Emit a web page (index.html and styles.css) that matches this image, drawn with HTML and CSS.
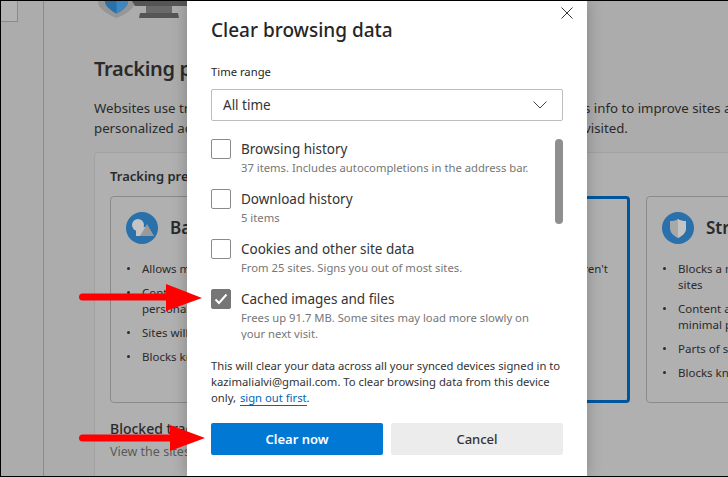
FILE: index.html
```html
<!DOCTYPE html>
<html lang="en">
<head>
<meta charset="utf-8">
<title>Clear browsing data</title>
<link rel="stylesheet" href="styles.css">
</head>
<body>
<div class="stage">
  <div class="page">
    <aside class="sidebar"><div class="side-tab"></div></aside>
    <main class="main">
      <svg class="hero" width="100" height="17" viewBox="0 0 100 17" aria-hidden="true">
        <path d="M0 -6H37V1C37 8 26 14 18.500 17C11 14 0 8 0 1Z" fill="#969696"/>
        <path d="M7 -6H30V1C30 5 24 10 18.500 12.500C13 10 7 5 7 1Z" fill="#2a70ab"/>
        <path d="M18.500 -6H30V1C30 5 24 10 18.500 12.500Z" fill="#3f86c0"/>
        <path d="M34 0H94V5H37Z" fill="#555"/>
        <rect x="48" y="5" width="26" height="7" fill="#6a6a6a"/>
        <path d="M42 12H80L81 17H41Z" fill="#555"/>
      </svg>
      <h1 class="page-title">Tracking p</h1>
      <div class="intro-line"><span>Websites use tr</span><span>s info to improve sites a</span></div>
      <div class="intro-line"><span>personalized ac</span><span>visited.</span></div>
      <section class="panel">
        <h2 class="panel-title">Tracking pre</h2>
        <div class="levels">
          <article class="level">
            <header class="level-head">
              <svg class="level-icon" viewBox="0 0 32 32" aria-hidden="true"><circle cx="16" cy="16" r="16" fill="#2a70ab"/><circle cx="12" cy="13" r="6" fill="#c4c4c4"/><rect x="10" y="15" width="12" height="9" fill="#c4c4c4"/><path d="M14 24L21 12L28 24Z" fill="#9a9a9a"/></svg>
              <h3 class="level-name">Ba</h3>
            </header>
            <ul class="level-list">
              <li>Allows m</li>
              <li>Cont<br>personal</li>
              <li>Sites will</li>
              <li>Blocks kn</li>
            </ul>
          </article>
          <article class="level level-on">
            <ul class="level-list level-list-end">
              <li>ren't</li>
            </ul>
          </article>
          <article class="level">
            <header class="level-head">
              <svg class="level-icon" viewBox="0 0 32 32" aria-hidden="true"><circle cx="16" cy="16" r="16" fill="#2a70ab"/><path d="M8 9C12 9 14 8.500 16 7C18 8.500 20 9 24 9V16C24 21 20 24 16 26C12 24 8 21 8 16Z" fill="#a8a8a8"/><path d="M16 7C18 8.500 20 9 24 9V16C24 21 20 24 16 26Z" fill="#c4c4c4"/></svg>
              <h3 class="level-name">Str</h3>
            </header>
            <ul class="level-list">
              <li>Blocks a m<br>sites</li>
              <li>Content a<br>minimal p</li>
              <li>Parts of s</li>
              <li>Blocks kn</li>
            </ul>
          </article>
        </div>
        <h2 class="blocked-title">Blocked trac</h2>
        <p class="blocked-text">View the sites</p>
      </section>
    </main>
  </div>

  <div class="dialog" role="dialog">
    <svg class="close" width="12" height="12" viewBox="0 0 12 12" aria-hidden="true"><path d="M0.500 0.500L11.500 11.500M11.500 0.500L0.500 11.500" stroke="#333" stroke-width="1" fill="none"/></svg>
    <h2 class="dialog-title">Clear browsing data</h2>
    <div class="field-label">Time range</div>
    <div class="select">
      <span>All time</span>
      <svg width="14" height="8" viewBox="0 0 14 8" aria-hidden="true"><path d="M0.500 0.500L7 7L13.500 0.500" stroke="#444" stroke-width="1" fill="none"/></svg>
    </div>
    <div class="list">
      <div class="scrollbar"></div>
      <div class="row"><span class="box"></span><div><div class="row-title">Browsing history</div><div class="row-sub">37 items. Includes autocompletions in the address bar.</div></div></div>
      <div class="row"><span class="box"></span><div><div class="row-title">Download history</div><div class="row-sub">5 items</div></div></div>
      <div class="row"><span class="box"></span><div><div class="row-title">Cookies and other site data</div><div class="row-sub">From 25 sites. Signs you out of most sites.</div></div></div>
      <div class="row"><span class="box box-on"><svg width="14" height="12" viewBox="0 0 14 12" aria-hidden="true"><path d="M1.500 6.500L5 10L12.500 1.500" stroke="#fff" stroke-width="2" fill="none"/></svg></span><div><div class="row-title">Cached images and files</div><div class="row-sub">Frees up 91.7 MB. Some sites may load more slowly on<br>your next visit.</div></div></div>
    </div>
    <p class="note">This will clear your data across all your synced devices signed in to<br>kazimalialvi@gmail.com. To clear browsing data from this device<br>only, <a class="link" href="#">sign out first</a>.</p>
    <div class="actions">
      <button class="btn btn-primary">Clear now</button>
      <button class="btn btn-plain">Cancel</button>
    </div>
  </div>

  <svg class="arrows" width="728" height="477" viewBox="0 0 728 477" aria-hidden="true">
    <path d="M82.500 297H170" stroke="#fe0000" stroke-width="7" stroke-linecap="round"/>
    <path d="M166 284L202 298L166 311Z" fill="#fe0000"/>
    <path d="M82.500 438H174" stroke="#fe0000" stroke-width="7" stroke-linecap="round"/>
    <path d="M170 425L205 438L170 451Z" fill="#fe0000"/>
  </svg>
</div>
</body>
</html>
```

FILE: styles.css
```css
* { box-sizing: border-box; }
html, body { margin: 0; padding: 0; }
body { font-family: "Noto Sans", "Open Sans", sans-serif; color: #262626; }
h1, h2, h3, p, ul { margin: 0; padding: 0; }

.stage {
  position: relative;
  width: 728px;
  height: 477px;
  overflow: hidden;
  background: #acacac;
  border-top: 1px solid #000;
  border-bottom: 1px solid #000;
  border-left: 1px solid #000;
}

.page { display: flex; height: 100%; }
.sidebar { width: 43px; flex: none; border-right: 1px solid #8a8a8a; }
.side-tab { width: 17px; height: 21px; background: #b2b2b2; border: 1px solid #8a8a8a; border-width: 0 1px 1px 0; }
.main { flex: none; width: 684px; padding-left: 50px; color: #2a2a2a; }
.hero { display: block; margin-left: 4px; }

.page-title { font-size: 20px; line-height: 28px; font-weight: 600; margin-top: 37px; white-space: nowrap; letter-spacing: -0.3px; }
.intro-line { display: grid; grid-template-columns: 490px 1fr; font-size: 13.250px; line-height: 20px; white-space: nowrap; overflow: hidden; }
.page-title + .intro-line { margin-top: 15px; }
.panel { margin-top: 14px; width: 700px; height: 340px; padding: 14px 15px; background: #b0b0b0; border: 1px solid #a2a2a2; border-radius: 4px 0 0 0; }
.panel-title { font-size: 13px; line-height: 18px; font-weight: 600; }
.levels { display: grid; grid-template-columns: repeat(3, 252px); gap: 16px; margin-top: 11px; }
.level { height: 207px; padding: 15px; border: 1px solid #8a8a8a; border-radius: 4px; }
.level-on { border: 3px solid #00569c; padding: 13px; }
.level-head { display: flex; align-items: center; gap: 12px; }
.level-icon { width: 32px; height: 32px; flex: none; display: block; }
.level-name { font-size: 17px; line-height: 32px; font-weight: 600; }
.level-list { list-style: none; margin-top: 17px; font-size: 11.500px; line-height: 16px; white-space: nowrap; }
.level-list li { position: relative; padding-left: 16px; margin-bottom: 8px; }
.level-list li::before { content: ""; position: absolute; left: 1px; top: 6px; width: 3px; height: 3px; border-radius: 50%; background: #2a2a2a; }
.level-list-end { margin-top: 49px; text-align: right; padding-right: 6px; }
.level-list-end li::before { display: none; }
.blocked-title { font-size: 14px; line-height: 18px; font-weight: 500; margin-top: 17px; }
.blocked-text { font-size: 12.500px; line-height: 16px; margin-top: 6px; color: #5a5a5a; }

.dialog {
  position: absolute;
  left: 186px;
  top: 0;
  width: 400px;
  height: 475px;
  padding: 16px 24px 0;
  background: #fff;
  box-shadow: 0 0 14px rgba(0, 0, 0, 0.25);
}
.close { position: absolute; right: 14px; top: 6px; display: block; }
.dialog-title { font-size: 19px; line-height: 26px; font-weight: 500; color: #262626; }
.field-label { font-size: 11.250px; line-height: 16px; margin-top: 21px; color: #262626; }
.select { display: flex; align-items: center; justify-content: space-between; height: 32px; margin-top: 9px; padding: 0 15px 0 11px; border: 1px solid #bdbdbd; border-radius: 2px; font-size: 13.500px; color: #333; }
.list { position: relative; height: 201px; margin-top: 18px; overflow: hidden; }
.scrollbar { position: absolute; right: 0; top: 0; width: 8px; height: 85px; border-radius: 4px; background: #8f8f8f; }
.row { display: flex; gap: 10px; height: 50px; }
.box { flex: none; width: 20px; height: 20px; border: 1px solid #8a8a8a; border-radius: 2px; display: flex; align-items: center; justify-content: center; }
.box-on { background: #767676; border-color: #767676; }
.row-title { font-size: 13.500px; line-height: 20px; color: #333; }
.row-sub { font-size: 11.250px; line-height: 16px; color: #767676; margin-top: 1px; white-space: nowrap; }
.note { font-size: 11.250px; line-height: 16px; color: #333; margin-top: 18px; white-space: nowrap; }
.link { color: #0067b8; text-decoration: none; border-bottom: 1px solid #0067b8; margin-left: 1px; }
.actions { display: flex; gap: 8px; margin-top: 17px; }
.btn { flex: 1; height: 32px; border: 0; border-radius: 2px; font: 600 13px/32px "Noto Sans", sans-serif; padding: 0; }
.btn-primary { background: #0078d4; color: #fff; }
.btn-plain { background: #ececec; color: #333; font-weight: 500; }

.arrows { position: absolute; left: -1px; top: -1px; display: block; pointer-events: none; }
```
